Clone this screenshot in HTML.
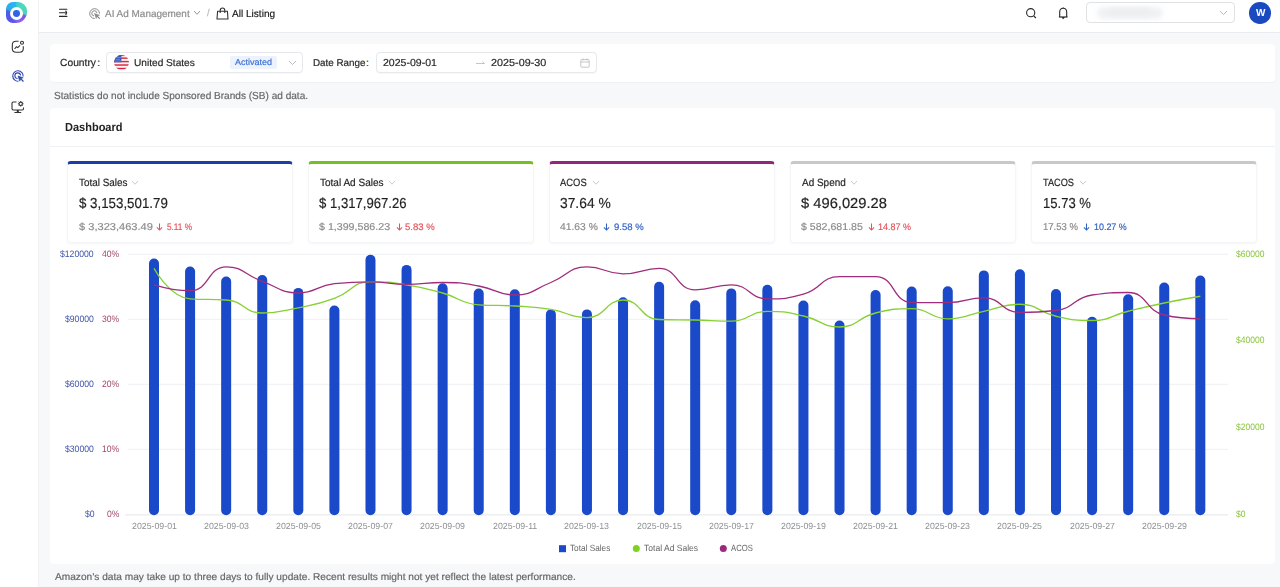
<!DOCTYPE html>
<html><head><meta charset="utf-8">
<style>
*{box-sizing:border-box;margin:0;padding:0}
html,body{width:1280px;height:587px;overflow:hidden}
body{background:#f7f8fa;font-family:"Liberation Sans",sans-serif;color:#262626;position:relative}
.abs{position:absolute;white-space:nowrap}
.side{position:absolute;left:0;top:0;width:38.5px;height:587px;background:#fff;border-right:1px solid #f0f1f4}
.hdr{position:absolute;left:38.5px;top:0;width:1241.5px;height:32.5px;background:#fff;border-bottom:1px solid #e9ebef}
.card{position:absolute;background:#fff;border-radius:4px}
.t10{font-size:10px;line-height:10px}
.kpi{position:absolute;top:160.8px;width:226.2px;height:82px;background:#fff;border-radius:4px;border:1px solid #f4f5f7;border-top:3px solid #1747c4;box-shadow:0 1px 2.5px rgba(0,0,0,0.045)}
.kt{position:absolute;left:11px;top:14.5px;font-size:10px;line-height:10px;color:#333;white-space:nowrap}
.kt svg{position:absolute;top:1.5px}
.kv{position:absolute;left:11px;top:32.2px;font-size:14.2px;line-height:14px;letter-spacing:-0.5px;color:#222;white-space:nowrap}
.ks{position:absolute;left:11px;top:57.5px;font-size:10.2px;line-height:11px;letter-spacing:0.3px;color:#8a8a8a;white-space:nowrap}
.kd{font-size:9.3px;letter-spacing:0.1px;position:relative;padding-left:11px}
.kd svg{position:absolute;left:1px;top:1.5px}
.red{color:#e5535b}
.blue{color:#2f5fc4}
svg text.ax{font-family:"Liberation Sans",sans-serif;font-size:8.5px}
svg text.lg{font-family:"Liberation Sans",sans-serif;font-size:8.3px;fill:#666}
.tx{position:absolute;white-space:nowrap;transform-origin:0 0;-webkit-text-stroke:0.18px currentColor}
.ch{-webkit-text-stroke:0}
body{text-rendering:geometricPrecision}
</style></head><body>
<!-- sidebar -->
<div class="side"></div>
<div class="abs" style="left:5.7px;top:2.2px;width:21.2px;height:21.3px;border-radius:7px 9px 11px 7px;background:conic-gradient(from 0deg at 10.6px 11.1px,#3fcdd0 0deg,#4fd8bc 30deg,#4cd5b8 95deg,#7a58e8 108deg,#8f62f0 170deg,#5a55e4 205deg,#4a5de8 280deg,#2fa8ee 295deg,#2ab8f0 355deg,#3fcdd0 360deg)"></div>
<div class="abs" style="left:9.9px;top:6.8px;width:13.2px;height:13.2px;border-radius:50%;background:#fff"></div>
<div class="abs" style="left:13.1px;top:10px;width:6.8px;height:6.8px;border-radius:50%;background:#2f66e8"></div>
<svg class="abs" style="left:11px;top:40px" width="14" height="14" viewBox="0 0 14 14" fill="none" stroke="#333" stroke-width="1.1">
 <path d="M7.6,1.3 H5 Q1.3,1.3 1.3,5 V8.6 Q1.3,12.3 5,12.3 H8.6 Q12.3,12.3 12.3,8.6 V6.3"/>
 <circle cx="11" cy="2.7" r="1.5"/>
 <path d="M3.6,9 L5.4,6.7 L6.8,7.6 L9,5.3"/>
</svg>
<svg class="abs" style="left:11.5px;top:70.3px" width="12.5" height="12.5" viewBox="0 0 24 24" fill="none" stroke="#2b45ae" stroke-width="2.1">
 <path d="M21.4,12.4 A10,10 0 1 0 12.4,21.4"/>
 <path d="M16.3,10.6 A5.4,5.4 0 1 0 10.6,16.3"/>
 <path d="M11.5,11.5 L21.5,15 L16.5,16.5 L15,21.5 Z" fill="#2b45ae" stroke-linejoin="round" stroke-width="1.2"/>
 <path d="M16.5,16.5 L22,22" stroke-width="2.4"/>
</svg>
<svg class="abs" style="left:11px;top:100.5px" width="13.5" height="12.5" viewBox="0 0 13.5 12.5" fill="none" stroke="#333" stroke-width="1.1">
 <path d="M5.5,1 H2.3 Q1,1 1,2.3 V7.8 Q1,9 2.3,9 H11.3 Q12.5,9 12.5,7.8 V6.6"/>
 <path d="M6.8,9 V11.3" stroke-width="2"/>
 <path d="M3.4,11.6 H10.2" stroke-width="1.2"/>
 <circle cx="9.7" cy="2.8" r="1.7"/>
 <path d="M9.7,0 V0.9 M9.7,4.7 V5.6 M6.9,2.8 H7.8 M11.6,2.8 H12.5 M7.7,0.8 L8.3,1.4 M11.1,4.2 L11.7,4.8 M11.7,0.8 L11.1,1.4 M8.3,4.2 L7.7,4.8" stroke-width="1"/>
</svg>
<!-- header -->
<div class="hdr"></div>
<svg class="abs" style="left:58px;top:7px" width="11" height="11" viewBox="0 0 11 11" fill="none" stroke="#262626" stroke-width="1.15" stroke-linecap="round">
 <path d="M1.5,2.2 H8.9 M1.5,9.4 H8.9 M1.5,5.75 H7.4"/>
 <path d="M7.9,4.3 Q9.3,5.75 7.9,7.2" stroke-width="1.3"/>
</svg>
<svg class="abs" style="left:89px;top:7.6px" width="12" height="11.5" viewBox="0 0 24 23" fill="none" stroke="#8a8a8a" stroke-width="2">
 <path d="M21,11.4 A9.8,9.8 0 1 0 11.4,21"/>
 <path d="M15.9,10 A5.2,5.2 0 1 0 10,15.9"/>
 <path d="M11,11 L21,14.4 L16,16 L14.4,21 Z" fill="#8a8a8a" stroke-linejoin="round" stroke-width="1.1"/>
 <path d="M16,16 L21.5,21.5" stroke-width="2.3"/>
</svg>
<svg class="abs" style="left:193px;top:10px" width="8" height="6" viewBox="0 0 8 6" fill="none" stroke="#999" stroke-width="1"><path d="M1,1 L4,4.3 L7,1"/></svg>
<svg class="abs" style="left:216px;top:6.5px" width="13" height="13" viewBox="0 0 13 13" fill="none" stroke="#333" stroke-width="1.1">
 <path d="M1.6,4.2 H11.4 L12,12 H1 Z" stroke-linejoin="round"/>
 <path d="M4.2,6 V3.4 Q4.2,1 6.5,1 Q8.8,1 8.8,3.4 V6"/>
</svg>
<svg class="abs" style="left:1025px;top:6.5px" width="12" height="12" viewBox="0 0 12 12" fill="none" stroke="#2a2a2a" stroke-width="1.1">
 <circle cx="5.7" cy="5.7" r="4.1"/><path d="M8.7,8.8 L10.9,11"/>
</svg>
<svg class="abs" style="left:1057px;top:6.5px" width="12" height="13" viewBox="0 0 12 13" fill="none" stroke="#2a2a2a" stroke-width="1.1">
 <path d="M2.7,10 V5.2 Q2.7,1.2 6.2,1.2 Q9.7,1.2 9.7,5.2 V10" />
 <path d="M1.9,10 H10.5" stroke-width="1.2"/>
 <path d="M5,10.6 L6.2,11.7 L7.4,10.6 Z" fill="#2a2a2a" stroke-width="0.8"/>
 <path d="M6.2,0.4 V1.2" stroke-width="0.9"/>
</svg>
<div class="abs" style="left:1086px;top:2.3px;width:148.5px;height:21px;border:1px solid #dfe1e5;border-radius:4px;background:#fff"></div>
<div class="abs" style="left:1097px;top:7px;width:66px;height:12px;border-radius:6px;background:#f0f1f3;filter:blur(2.5px)"></div><div class="abs" style="left:1110px;top:8px;width:40px;height:8px;border-radius:4px;background:#eceef0;filter:blur(2px)"></div>
<svg class="abs" style="left:1219px;top:10px" width="9" height="6" viewBox="0 0 9 6" fill="none" stroke="#bbb" stroke-width="1"><path d="M1,1 L4.5,4.5 L8,1"/></svg>
<div class="abs" style="left:1249.45px;top:1.95px;width:21.6px;height:21.6px;border-radius:50%;background:#1b49c0"></div>

<!-- filter card -->
<div class="card" style="left:50.3px;top:43.8px;width:1224.4px;height:38.4px;box-shadow:0 1px 1.5px rgba(0,0,0,0.035)"></div>
<div class="abs" style="left:106.3px;top:52px;width:196.3px;height:21px;border:1px solid #e6e8eb;border-radius:4px;background:#fff;box-shadow:0 0.5px 1px rgba(0,0,0,0.03)"></div>
<svg class="abs" style="left:114px;top:55px" width="15" height="15" viewBox="0 0 15 15">
 <defs><clipPath id="fc"><circle cx="7.5" cy="7.5" r="7.45"/></clipPath></defs>
 <g clip-path="url(#fc)">
  <rect width="15" height="15" fill="#fdf5f6"/>
  <rect y="-0.3" width="15" height="1.4" fill="#d9263b"/>
  <rect y="2.45" width="15" height="1.4" fill="#d9263b"/>
  <rect y="5.9" width="15" height="1.4" fill="#d9263b"/>
  <rect y="9.3" width="15" height="1.45" fill="#d9263b"/>
  <rect y="12.8" width="15" height="1.45" fill="#d9263b"/>
  <rect width="7.4" height="7.3" fill="#3756b0"/>
  <g fill="#c9d4f0"><circle cx="2" cy="2.5" r="0.5"/><circle cx="4" cy="2.5" r="0.5"/><circle cx="6" cy="2.5" r="0.5"/><circle cx="3" cy="4.2" r="0.5"/><circle cx="5" cy="4.2" r="0.5"/><circle cx="2" cy="5.9" r="0.5"/><circle cx="4" cy="5.9" r="0.5"/><circle cx="6" cy="5.9" r="0.5"/></g>
 </g>
</svg>
<div class="abs" style="left:229.8px;top:55.5px;width:47.2px;height:13.4px;background:#edf3fd;border-radius:2px"></div>
<svg class="abs" style="left:287.5px;top:59.5px" width="9" height="6" viewBox="0 0 9 6" fill="none" stroke="#bbb" stroke-width="1"><path d="M1,1 L4.5,4.5 L8,1"/></svg>
<div class="abs" style="left:375.6px;top:52.1px;width:221.7px;height:20.6px;border:1px solid #e6e8eb;border-radius:4px;background:#fff;box-shadow:0 0.5px 1px rgba(0,0,0,0.03)"></div>
<svg class="abs" style="left:475px;top:59.5px" width="11" height="7" viewBox="0 0 11 7" fill="none" stroke="#c5c5c5" stroke-width="1"><path d="M1,3.5 H9.5 M7.5,1.5 L9.5,3.5"/></svg>
<svg class="abs" style="left:579.5px;top:57.8px" width="10" height="10" viewBox="0 0 10 10" fill="none" stroke="#c0c0c0" stroke-width="0.9"><rect x="0.8" y="1.6" width="8.4" height="7.6" rx="0.8"/><path d="M0.8,4 H9.2 M3,0.5 V2.4 M7,0.5 V2.4"/></svg>


<!-- dashboard card -->
<div class="card" style="left:49.5px;top:107.8px;width:1225.2px;height:456.7px"></div>
<div class="abs" style="left:49.5px;top:146px;width:1225.2px;height:1px;background:#eff1f4"></div>

<div class="kpi" style="left:67px;border-top-color:#1c3da6"></div>
<div class="kpi" style="left:308px;border-top-color:#74c021"></div>
<div class="kpi" style="left:549px;border-top-color:#93257a"></div>
<div class="kpi" style="left:790px;border-top-color:#c8c8c8"></div>
<div class="kpi" style="left:1031px;border-top-color:#c8c8c8"></div>

<svg class="abs" style="left:0;top:0" width="1280" height="587" viewBox="0 0 1280 587">
<line x1="127.8" y1="254.3" x2="1228" y2="254.3" stroke="#eff1f4" stroke-width="1"/>
<line x1="127.8" y1="319.3" x2="1228" y2="319.3" stroke="#eff1f4" stroke-width="1"/>
<line x1="127.8" y1="384.3" x2="1228" y2="384.3" stroke="#eff1f4" stroke-width="1"/>
<line x1="127.8" y1="449.3" x2="1228" y2="449.3" stroke="#eff1f4" stroke-width="1"/>
<line x1="125" y1="514.9" x2="1228" y2="514.9" stroke="#e3e5e9" stroke-width="1"/>
<rect x="149.00" y="258.60" width="10" height="256.60" rx="5" ry="5" fill="#1a49c9"/>
<rect x="185.08" y="266.60" width="10" height="248.60" rx="5" ry="5" fill="#1a49c9"/>
<rect x="221.16" y="276.60" width="10" height="238.60" rx="5" ry="5" fill="#1a49c9"/>
<rect x="257.24" y="275.00" width="10" height="240.20" rx="5" ry="5" fill="#1a49c9"/>
<rect x="293.32" y="287.90" width="10" height="227.30" rx="5" ry="5" fill="#1a49c9"/>
<rect x="329.40" y="305.50" width="10" height="209.70" rx="5" ry="5" fill="#1a49c9"/>
<rect x="365.48" y="254.80" width="10" height="260.40" rx="5" ry="5" fill="#1a49c9"/>
<rect x="401.56" y="264.90" width="10" height="250.30" rx="5" ry="5" fill="#1a49c9"/>
<rect x="437.64" y="283.20" width="10" height="232.00" rx="5" ry="5" fill="#1a49c9"/>
<rect x="473.72" y="288.60" width="10" height="226.60" rx="5" ry="5" fill="#1a49c9"/>
<rect x="509.80" y="289.30" width="10" height="225.90" rx="5" ry="5" fill="#1a49c9"/>
<rect x="545.88" y="309.40" width="10" height="205.80" rx="5" ry="5" fill="#1a49c9"/>
<rect x="581.96" y="309.40" width="10" height="205.80" rx="5" ry="5" fill="#1a49c9"/>
<rect x="618.04" y="297.30" width="10" height="217.90" rx="5" ry="5" fill="#1a49c9"/>
<rect x="654.12" y="281.80" width="10" height="233.40" rx="5" ry="5" fill="#1a49c9"/>
<rect x="690.20" y="300.30" width="10" height="214.90" rx="5" ry="5" fill="#1a49c9"/>
<rect x="726.28" y="288.40" width="10" height="226.80" rx="5" ry="5" fill="#1a49c9"/>
<rect x="762.36" y="284.80" width="10" height="230.40" rx="5" ry="5" fill="#1a49c9"/>
<rect x="798.44" y="300.50" width="10" height="214.70" rx="5" ry="5" fill="#1a49c9"/>
<rect x="834.52" y="320.50" width="10" height="194.70" rx="5" ry="5" fill="#1a49c9"/>
<rect x="870.60" y="290.00" width="10" height="225.20" rx="5" ry="5" fill="#1a49c9"/>
<rect x="906.68" y="286.50" width="10" height="228.70" rx="5" ry="5" fill="#1a49c9"/>
<rect x="942.76" y="286.20" width="10" height="229.00" rx="5" ry="5" fill="#1a49c9"/>
<rect x="978.84" y="270.40" width="10" height="244.80" rx="5" ry="5" fill="#1a49c9"/>
<rect x="1014.92" y="269.20" width="10" height="246.00" rx="5" ry="5" fill="#1a49c9"/>
<rect x="1051.00" y="289.00" width="10" height="226.20" rx="5" ry="5" fill="#1a49c9"/>
<rect x="1087.08" y="316.80" width="10" height="198.40" rx="5" ry="5" fill="#1a49c9"/>
<rect x="1123.16" y="294.20" width="10" height="221.00" rx="5" ry="5" fill="#1a49c9"/>
<rect x="1159.24" y="282.50" width="10" height="232.70" rx="5" ry="5" fill="#1a49c9"/>
<rect x="1195.32" y="275.50" width="10" height="239.70" rx="5" ry="5" fill="#1a49c9"/>
<path d="M154.00,268.40C154.00,268.40 169.63,297.46 190.08,298.90C205.71,300.00 208.67,298.90 226.16,300.00C244.75,301.17 243.74,313.00 262.24,313.00C279.82,313.00 280.48,311.41 298.32,307.80C316.56,304.11 316.93,304.69 334.40,298.40C353.01,291.69 351.61,281.80 370.48,281.80C387.69,281.80 388.72,282.03 406.56,284.80C424.80,287.63 424.83,288.06 442.64,293.00C460.91,298.06 460.23,303.54 478.72,304.80C496.31,306.00 496.79,304.85 514.80,306.00C532.87,307.15 533.03,306.51 550.88,309.40C569.11,312.36 569.66,317.70 586.96,317.70C605.74,317.70 605.18,300.00 623.04,300.00C641.26,300.00 639.93,318.93 659.12,319.50C676.01,320.00 677.16,319.58 695.20,320.00C713.24,320.43 713.56,321.20 731.28,321.20C749.64,321.20 749.07,311.30 767.36,311.30C785.15,311.30 785.72,312.15 803.44,316.00C821.80,320.00 821.71,327.00 839.52,327.00C857.79,327.00 856.99,317.58 875.60,313.00C893.07,308.70 893.92,308.70 911.68,308.70C930.00,308.70 929.57,318.80 947.76,318.80C965.65,318.80 965.78,314.94 983.84,311.30C1001.86,307.67 1002.18,304.25 1019.92,304.25C1038.26,304.25 1037.55,312.09 1056.00,316.25C1073.63,320.22 1074.26,320.50 1092.08,320.50C1110.34,320.50 1110.06,315.64 1128.16,311.25C1146.14,306.89 1146.13,306.77 1164.24,303.00C1182.21,299.27 1200.32,296.25 1200.32,296.25" fill="none" stroke="#86d132" stroke-width="1.3"/>
<path d="M154.00,284.80C154.00,284.80 173.56,290.70 190.08,290.70C209.64,290.70 207.16,266.80 226.16,266.80C243.24,266.80 243.98,274.67 262.24,281.30C280.06,287.77 280.12,293.00 298.32,293.00C316.20,293.00 316.08,285.66 334.40,283.70C352.16,281.80 352.45,281.80 370.48,281.80C388.53,281.80 388.51,284.40 406.56,284.40C424.59,284.40 424.63,282.50 442.64,282.50C460.71,282.50 460.91,282.91 478.72,286.00C496.99,289.16 497.00,295.00 514.80,295.00C533.08,295.00 533.11,289.44 550.88,282.50C569.19,275.34 568.30,266.80 586.96,266.80C604.38,266.80 604.93,273.80 623.04,273.80C641.01,273.80 642.34,268.40 659.12,268.40C678.42,268.40 675.89,289.80 695.20,289.80C711.97,289.80 713.80,284.80 731.28,284.80C749.88,284.80 748.76,298.90 767.36,298.90C784.84,298.90 786.29,298.90 803.44,294.20C822.37,289.01 820.52,276.60 839.52,276.60C856.60,276.60 859.42,276.60 875.60,276.60C895.50,276.60 891.78,302.03 911.68,302.40C927.86,302.70 929.80,302.70 947.76,302.70C965.88,302.70 966.41,297.80 983.84,297.80C1002.49,297.80 1001.20,312.50 1019.92,312.50C1037.28,312.50 1038.71,312.50 1056.00,310.50C1074.79,308.33 1073.30,297.71 1092.08,295.00C1109.38,292.50 1111.58,292.50 1128.16,292.50C1147.66,292.50 1144.77,310.60 1164.24,315.00C1180.85,318.75 1200.32,318.75 1200.32,318.75" fill="none" stroke="#a02d7c" stroke-width="1.3"/>
<rect x="559" y="545.2" width="7" height="7" fill="#1a49c9"/>
<circle cx="636.3" cy="548.5" r="3.5" fill="#7ed321"/>
<circle cx="723.3" cy="548.5" r="3.5" fill="#9b2a7e"/>
</svg>

<div class="tx" style="left:105.00px;top:9.90px;font-size:10.0px;line-height:10.0px;color:#8c8c8c;transform:scaleX(0.9953)">AI Ad Management</div>
<div class="tx" style="left:232.30px;top:9.80px;font-size:10.2px;line-height:10.2px;color:#1a1a1a;transform:scaleX(0.9884)">All Listing</div>
<div class="tx" style="left:207.20px;top:9.30px;font-size:10.0px;line-height:10.0px;color:#b8b8b8;transform:scaleX(0.9455)">/</div>
<div class="tx" style="left:1255.70px;top:9.00px;font-size:10.2px;line-height:10.2px;color:#fff;font-weight:700;-webkit-text-stroke:0;transform:scaleX(0.9789)">W</div>
<div class="tx" style="left:60.20px;top:58.90px;font-size:10.3px;line-height:10.3px;color:#262626;transform:scaleX(0.9972)">Country</div>
<div class="tx" style="left:134.24px;top:58.90px;font-size:10.0px;line-height:10.0px;color:#262626;transform:scaleX(1.0127)">United States</div>
<div class="tx" style="left:235.00px;top:58.20px;font-size:8.7px;line-height:8.7px;color:#3c6fd2;transform:scaleX(1.0355)">Activated</div>
<div class="tx" style="left:313.05px;top:58.80px;font-size:9.9px;line-height:9.9px;color:#262626;transform:scaleX(0.9961)">Date Range</div>
<div class="tx" style="left:382.98px;top:59.00px;font-size:10.2px;line-height:10.2px;color:#262626;transform:scaleX(1.0361)">2025-09-01</div>
<div class="tx" style="left:491.37px;top:59.00px;font-size:10.2px;line-height:10.2px;color:#262626;transform:scaleX(1.0615)">2025-09-30</div>
<div class="tx" style="left:54.31px;top:91.90px;font-size:10.2px;line-height:10.2px;color:#666;transform:scaleX(0.9881)">Statistics do not include Sponsored Brands (SB) ad data.</div>
<div class="tx" style="left:65.10px;top:122.20px;font-size:11.8px;line-height:11.8px;color:#222;font-weight:700;-webkit-text-stroke:0;transform:scaleX(0.9328)">Dashboard</div>
<div class="tx" style="left:54.80px;top:573.00px;font-size:10.0px;line-height:10.0px;color:#666;transform:scaleX(1.0142)">Amazon’s data may take up to three days to fully update. Recent results might not yet reflect the latest performance.</div>
<div class="tx" style="left:78.76px;top:178.10px;font-size:10.5px;line-height:10.5px;color:#262626;transform:scaleX(0.9419)">Total Sales</div>
<div class="tx" style="left:78.67px;top:197.40px;font-size:14.5px;line-height:14.5px;color:#1f1f1f;transform:scaleX(0.9180)">$ 3,153,501.79</div>
<div class="tx" style="left:78.62px;top:222.90px;font-size:10.0px;line-height:10.0px;color:#8c8c8c;transform:scaleX(1.1076)">$ 3,323,463.49</div>
<div class="tx" style="left:167.16px;top:221.90px;font-size:9.4px;line-height:9.4px;color:#e5535b;transform:scaleX(0.8793)">5.11 %</div>
<div class="tx" style="left:319.56px;top:178.10px;font-size:10.5px;line-height:10.5px;color:#262626;transform:scaleX(0.9545)">Total Ad Sales</div>
<div class="tx" style="left:319.47px;top:197.40px;font-size:14.5px;line-height:14.5px;color:#1f1f1f;transform:scaleX(0.9055)">$ 1,317,967.26</div>
<div class="tx" style="left:319.43px;top:222.90px;font-size:10.0px;line-height:10.0px;color:#8c8c8c;transform:scaleX(1.0652)">$ 1,399,586.23</div>
<div class="tx" style="left:404.59px;top:221.90px;font-size:9.4px;line-height:9.4px;color:#e5535b;transform:scaleX(1.0211)">5.83 %</div>
<div class="tx" style="left:560.40px;top:178.10px;font-size:10.5px;line-height:10.5px;color:#262626;transform:scaleX(0.8957)">ACOS</div>
<div class="tx" style="left:559.82px;top:197.40px;font-size:14.5px;line-height:14.5px;color:#1f1f1f;transform:scaleX(0.9531)">37.64 %</div>
<div class="tx" style="left:560.04px;top:222.90px;font-size:10.0px;line-height:10.0px;color:#8c8c8c;transform:scaleX(1.0317)">41.63 %</div>
<div class="tx" style="left:613.59px;top:221.90px;font-size:9.4px;line-height:9.4px;color:#2f5fc4;transform:scaleX(1.0175)">9.58 %</div>
<div class="tx" style="left:801.70px;top:178.10px;font-size:10.5px;line-height:10.5px;color:#262626;transform:scaleX(0.9495)">Ad Spend</div>
<div class="tx" style="left:801.35px;top:197.40px;font-size:14.5px;line-height:14.5px;color:#1f1f1f;transform:scaleX(1.0149)">$ 496,029.28</div>
<div class="tx" style="left:801.34px;top:222.90px;font-size:10.0px;line-height:10.0px;color:#8c8c8c;transform:scaleX(1.0597)">$ 582,681.85</div>
<div class="tx" style="left:878.48px;top:221.90px;font-size:9.4px;line-height:9.4px;color:#e5535b;transform:scaleX(0.9594)">14.87 %</div>
<div class="tx" style="left:1043.38px;top:178.10px;font-size:10.5px;line-height:10.5px;color:#262626;transform:scaleX(0.8748)">TACOS</div>
<div class="tx" style="left:1042.60px;top:197.40px;font-size:14.5px;line-height:14.5px;color:#1f1f1f;transform:scaleX(0.9005)">15.73 %</div>
<div class="tx" style="left:1042.78px;top:222.90px;font-size:10.0px;line-height:10.0px;color:#8c8c8c;transform:scaleX(0.9538)">17.53 %</div>
<div class="tx" style="left:1094.19px;top:221.90px;font-size:9.4px;line-height:9.4px;color:#2f5fc4;transform:scaleX(0.9504)">10.27 %</div>
<div class="tx" style="left:97.20px;top:58.90px;font-size:10.2px;line-height:10.2px;color:#262626">:</div>
<div class="tx" style="left:366.10px;top:58.80px;font-size:10.2px;line-height:10.2px;color:#262626">:</div>
<div class="tx ch" style="left:60.47px;top:248.80px;font-size:9.4px;line-height:9.4px;color:#3f55a8;transform:scaleX(0.9222)">$120000</div>
<div class="tx ch" style="left:101.77px;top:248.80px;font-size:9.4px;line-height:9.4px;color:#a4476f;transform:scaleX(0.9151)">40%</div>
<div class="tx ch" style="left:65.31px;top:313.80px;font-size:9.4px;line-height:9.4px;color:#3f55a8;transform:scaleX(0.9222)">$90000</div>
<div class="tx ch" style="left:101.77px;top:313.80px;font-size:9.4px;line-height:9.4px;color:#a4476f;transform:scaleX(0.9151)">30%</div>
<div class="tx ch" style="left:65.31px;top:378.80px;font-size:9.4px;line-height:9.4px;color:#3f55a8;transform:scaleX(0.9222)">$60000</div>
<div class="tx ch" style="left:101.77px;top:378.80px;font-size:9.4px;line-height:9.4px;color:#a4476f;transform:scaleX(0.9151)">20%</div>
<div class="tx ch" style="left:65.31px;top:443.80px;font-size:9.4px;line-height:9.4px;color:#3f55a8;transform:scaleX(0.9222)">$30000</div>
<div class="tx ch" style="left:101.77px;top:443.80px;font-size:9.4px;line-height:9.4px;color:#a4476f;transform:scaleX(0.9151)">10%</div>
<div class="tx ch" style="left:84.68px;top:508.80px;font-size:9.4px;line-height:9.4px;color:#3f55a8;transform:scaleX(0.9222)">$0</div>
<div class="tx ch" style="left:106.58px;top:508.80px;font-size:9.4px;line-height:9.4px;color:#a4476f;transform:scaleX(0.9151)">0%</div>
<div class="tx ch" style="left:1235.87px;top:249.70px;font-size:9.3px;line-height:9.3px;color:#8cc540;transform:scaleX(0.9148)">$60000</div>
<div class="tx ch" style="left:1235.87px;top:336.37px;font-size:9.3px;line-height:9.3px;color:#8cc540;transform:scaleX(0.9148)">$40000</div>
<div class="tx ch" style="left:1235.87px;top:423.03px;font-size:9.3px;line-height:9.3px;color:#8cc540;transform:scaleX(0.9148)">$20000</div>
<div class="tx ch" style="left:1235.87px;top:509.70px;font-size:9.3px;line-height:9.3px;color:#8cc540;transform:scaleX(0.9148)">$0</div>
<div class="tx ch" style="left:131.51px;top:522.20px;font-size:8.9px;line-height:8.9px;color:#8d9095;transform:scaleX(0.9888)">2025-09-01</div>
<div class="tx ch" style="left:203.67px;top:522.20px;font-size:8.9px;line-height:8.9px;color:#8d9095;transform:scaleX(0.9888)">2025-09-03</div>
<div class="tx ch" style="left:275.83px;top:522.20px;font-size:8.9px;line-height:8.9px;color:#8d9095;transform:scaleX(0.9888)">2025-09-05</div>
<div class="tx ch" style="left:347.99px;top:522.20px;font-size:8.9px;line-height:8.9px;color:#8d9095;transform:scaleX(0.9888)">2025-09-07</div>
<div class="tx ch" style="left:420.15px;top:522.20px;font-size:8.9px;line-height:8.9px;color:#8d9095;transform:scaleX(0.9888)">2025-09-09</div>
<div class="tx ch" style="left:492.68px;top:522.20px;font-size:8.9px;line-height:8.9px;color:#8d9095;transform:scaleX(0.9888)">2025-09-11</div>
<div class="tx ch" style="left:564.47px;top:522.20px;font-size:8.9px;line-height:8.9px;color:#8d9095;transform:scaleX(0.9888)">2025-09-13</div>
<div class="tx ch" style="left:636.63px;top:522.20px;font-size:8.9px;line-height:8.9px;color:#8d9095;transform:scaleX(0.9888)">2025-09-15</div>
<div class="tx ch" style="left:708.79px;top:522.20px;font-size:8.9px;line-height:8.9px;color:#8d9095;transform:scaleX(0.9888)">2025-09-17</div>
<div class="tx ch" style="left:780.95px;top:522.20px;font-size:8.9px;line-height:8.9px;color:#8d9095;transform:scaleX(0.9888)">2025-09-19</div>
<div class="tx ch" style="left:853.11px;top:522.20px;font-size:8.9px;line-height:8.9px;color:#8d9095;transform:scaleX(0.9888)">2025-09-21</div>
<div class="tx ch" style="left:925.27px;top:522.20px;font-size:8.9px;line-height:8.9px;color:#8d9095;transform:scaleX(0.9888)">2025-09-23</div>
<div class="tx ch" style="left:997.43px;top:522.20px;font-size:8.9px;line-height:8.9px;color:#8d9095;transform:scaleX(0.9888)">2025-09-25</div>
<div class="tx ch" style="left:1069.59px;top:522.20px;font-size:8.9px;line-height:8.9px;color:#8d9095;transform:scaleX(0.9888)">2025-09-27</div>
<div class="tx ch" style="left:1141.75px;top:522.20px;font-size:8.9px;line-height:8.9px;color:#8d9095;transform:scaleX(0.9888)">2025-09-29</div>
<div class="tx ch" style="left:570.07px;top:544.00px;font-size:9.0px;line-height:9.0px;color:#666;transform:scaleX(0.9149)">Total Sales</div>
<div class="tx ch" style="left:643.96px;top:544.00px;font-size:9.0px;line-height:9.0px;color:#666;transform:scaleX(0.9487)">Total Ad Sales</div>
<div class="tx ch" style="left:731.30px;top:544.00px;font-size:9.0px;line-height:9.0px;color:#666;transform:scaleX(0.8560)">ACOS</div>
<svg class="abs" style="left:131.4px;top:180px" width="8" height="6" viewBox="0 0 8 6" fill="none" stroke="#c4c4c4" stroke-width="0.9"><path d="M1,1 L4,4.2 L7,1"/></svg>
<svg class="abs" style="left:156.1px;top:222.5px" width="7" height="8" viewBox="0 0 7 8" fill="none" stroke="#e5535b" stroke-width="1.05"><path d="M3.5,0.6 V7 M0.9,4.4 L3.5,7 L6.1,4.4"/></svg>
<svg class="abs" style="left:388.2px;top:180px" width="8" height="6" viewBox="0 0 8 6" fill="none" stroke="#c4c4c4" stroke-width="0.9"><path d="M1,1 L4,4.2 L7,1"/></svg>
<svg class="abs" style="left:395.5px;top:222.5px" width="7" height="8" viewBox="0 0 7 8" fill="none" stroke="#e5535b" stroke-width="1.05"><path d="M3.5,0.6 V7 M0.9,4.4 L3.5,7 L6.1,4.4"/></svg>
<svg class="abs" style="left:591.5px;top:180px" width="8" height="6" viewBox="0 0 8 6" fill="none" stroke="#c4c4c4" stroke-width="0.9"><path d="M1,1 L4,4.2 L7,1"/></svg>
<svg class="abs" style="left:602.8px;top:222.5px" width="7" height="8" viewBox="0 0 7 8" fill="none" stroke="#2f5fc4" stroke-width="1.05"><path d="M3.5,0.6 V7 M0.9,4.4 L3.5,7 L6.1,4.4"/></svg>
<svg class="abs" style="left:849.8px;top:180px" width="8" height="6" viewBox="0 0 8 6" fill="none" stroke="#c4c4c4" stroke-width="0.9"><path d="M1,1 L4,4.2 L7,1"/></svg>
<svg class="abs" style="left:867.6px;top:222.5px" width="7" height="8" viewBox="0 0 7 8" fill="none" stroke="#e5535b" stroke-width="1.05"><path d="M3.5,0.6 V7 M0.9,4.4 L3.5,7 L6.1,4.4"/></svg>
<svg class="abs" style="left:1078.8px;top:180px" width="8" height="6" viewBox="0 0 8 6" fill="none" stroke="#c4c4c4" stroke-width="0.9"><path d="M1,1 L4,4.2 L7,1"/></svg>
<svg class="abs" style="left:1083.0px;top:222.5px" width="7" height="8" viewBox="0 0 7 8" fill="none" stroke="#2f5fc4" stroke-width="1.05"><path d="M3.5,0.6 V7 M0.9,4.4 L3.5,7 L6.1,4.4"/></svg>
</body></html>
